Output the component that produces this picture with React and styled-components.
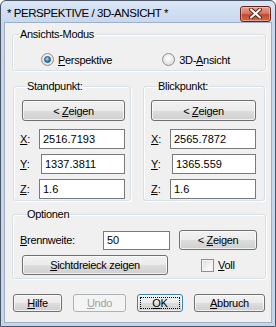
import React from 'react'
import styled, {createGlobalStyle} from 'styled-components'

const GlobalStyle = createGlobalStyle`
  html, body {
    margin: 0;
    padding: 0;
    background: #ffffff;
  }
  body {
    font-family: 'Liberation Sans', Arial, sans-serif;
    font-size: 11px;
    color: #000;
  }
`

const Window = styled.div`
  width: 276px;
  height: 327px;
  box-sizing: border-box;
  border: 1px solid #4a5566;
  border-radius: 6px 6px 0 0;
  background: linear-gradient(to bottom, #dbe6f5 0px, #c6d7ee 22px, #c4d5ec 100%);
  display: flex;
  flex-direction: column;
  padding: 0 3px 3px 3px;
  overflow: hidden;
`

const TitleBar = styled.div`
  height: 21px;
  display: flex;
  align-items: center;
  justify-content: space-between;
  padding: 0 1px 0 3px;
`

const Title = styled.span`
  font-size: 11.5px;
  letter-spacing: -0.45px;
  color: #000;
  padding-top: 2px;
`

const CloseButton = styled.div`
  width: 29px;
  height: 14px;
  margin-top: 4px;
  border: 1px solid #6d2418;
  border-radius: 3px;
  background: linear-gradient(to bottom, #e7a090 0%, #d67763 45%, #c14a30 55%, #cf6a4f 100%);
  display: flex;
  align-items: center;
  justify-content: center;
  box-shadow: inset 0 0 0 1px rgba(255, 220, 210, 0.45);
`

const Client = styled.div`
  flex: 1;
  background: #f0f0f0;
  border: 1px solid #9fb0c6;
  display: flex;
  flex-direction: column;
  padding: 5px 5px 0 7px;
`

const Group = styled.fieldset`
  margin: ${p => p.$mt || 0}px 0 0 ${p => p.$ml || 0}px;
  padding: ${p => p.$pad};
  min-width: 0;
  border: 1px solid #d5dfe5;
  border-radius: 3px;
  box-shadow: inset 1px 1px 0 #fff, 1px 1px 0 #fff;
  box-sizing: border-box;
  width: ${p => p.$w ? p.$w + 'px' : 'auto'};
`

const Legend = styled.legend`
  padding: 0 1px;
  margin-left: 6px;
  line-height: 13px;
  letter-spacing: -0.3px;
`

const Row = styled.div`
  display: flex;
  align-items: center;
  margin-top: ${p => p.$mt || 0}px;
`

const Columns = styled.div`
  display: flex;
  gap: 12px;
  margin-top: 9px;
  margin-left: 1px;
`

const Radio = styled.label`
  display: flex;
  align-items: center;
  gap: 4px;
  letter-spacing: -0.3px;
  margin-left: ${p => p.$ml}px;
`

const RadioDot = styled.span`
  width: 11px;
  height: 11px;
  border-radius: 50%;
  border: 1px solid #8e8f8f;
  background: radial-gradient(circle at 50% 40%, #ffffff 0%, #e6e6e6 60%, #d0d0d0 100%);
  display: flex;
  align-items: center;
  justify-content: center;
  &::after {
    content: '';
    display: ${p => p.$on ? 'block' : 'none'};
    width: 5px;
    height: 5px;
    border-radius: 50%;
    border: 1px solid #1e4f7a;
    background: radial-gradient(circle at 40% 35%, #a8e0ff 0%, #3d8fcf 50%, #17558e 100%);
  }
`

const Button = styled.button`
  box-sizing: border-box;
  width: ${p => p.$w}px;
  height: ${p => p.$h || 21}px;
  margin-left: ${p => p.$ml || 0}px;
  padding: 0;
  font-family: 'Liberation Sans', Arial, sans-serif;
  font-size: 11px;
  letter-spacing: -0.3px;
  color: ${p => p.$disabled ? '#a0a0a0' : '#000'};
  border: 1px solid ${p => p.$focus ? '#3c7fb1' : p.$disabled ? '#adb2b5' : '#707070'};
  border-radius: 3px;
  background: ${p => p.$disabled
    ? '#f4f4f4'
    : 'linear-gradient(to bottom, #f2f2f2 0%, #ebebeb 50%, #dddddd 51%, #cfcfcf 100%)'};
  box-shadow: inset 0 0 0 1px ${p => p.$disabled ? '#f4f4f4' : 'rgba(255,255,255,0.7)'};
  display: flex;
  align-items: center;
  justify-content: center;
  position: relative;
  flex-shrink: 0;
  white-space: pre;
  ${p => p.$focus && `
    &::after {
      content: '';
      position: absolute;
      inset: 2px;
      border: 1px dotted #000;
    }
  `}
`

const Field = styled.div`
  box-sizing: border-box;
  width: ${p => p.$w}px;
  height: ${p => p.$h || 20}px;
  border: 1px solid #7a7a7a;
  background: #fff;
  padding: 0 0 0 3px;
  display: flex;
  align-items: center;
  flex-shrink: 0;
`

const CoordRows = styled.div`
  display: flex;
  flex-direction: column;
  gap: 5px;
  margin-top: 8px;
`

const CoordLabel = styled.span`
  width: ${p => p.$w}px;
  flex-shrink: 0;
`

const Text = styled.span`
  letter-spacing: -0.3px;
  width: ${p => p.$w ? p.$w + 'px' : 'auto'};
  flex-shrink: 0;
`

const Check = styled.span`
  width: 11px;
  height: 11px;
  border: 1px solid #8e8f8f;
  background: linear-gradient(135deg, #dcdcdc 0%, #f4f4f4 60%, #ffffff 100%);
  box-shadow: inset 0 0 0 1px #f4f4f4;
  margin-left: 33px;
  margin-right: 4px;
  flex-shrink: 0;
`

const Footer = styled.div`
  display: flex;
  gap: 11px;
  margin-top: 15px;
  margin-left: 1px;
`

const U = styled.span`
  text-decoration: underline;
`

const Zeigen = () => <span>&lt; <U>Z</U>eigen</span>

export default function App() {
  return (
    <>
      <GlobalStyle />
      <Window>
        <TitleBar>
          <Title>* PERSPEKTIVE / 3D-ANSICHT *</Title>
          <CloseButton>
            <svg width="13" height="11" viewBox="0 0 13 11">
              <path d="M2 1.5 L11 9.5 M11 1.5 L2 9.5" stroke="#5a1d12" strokeWidth="4" strokeLinecap="round" />
              <path d="M2 1.5 L11 9.5 M11 1.5 L2 9.5" stroke="#ffffff" strokeWidth="2.2" strokeLinecap="round" />
            </svg>
          </CloseButton>
        </TitleBar>
        <Client>
          <Group $pad="12px 0 4px 0">
            <Legend>Ansichts-Modus</Legend>
            <Row>
              <Radio $ml={28}><RadioDot $on /><span><U>P</U>erspektive</span></Radio>
              <Radio $ml={50}><RadioDot /><span>3D-<U>A</U>nsicht</span></Radio>
            </Row>
          </Group>

          <Columns>
            <Group $w={118} $pad="7px 0 1px 6px">
              <Legend>Standpunkt:</Legend>
              <Button $w={103} $ml={2}><Zeigen /></Button>
              <CoordRows>
                <Row><CoordLabel $w={19}><U>X</U>:</CoordLabel><Field $w={86}>2516.7193</Field></Row>
                <Row><CoordLabel $w={21}><U>Y</U>:</CoordLabel><Field $w={84}>1337.3811</Field></Row>
                <Row><CoordLabel $w={19}><U>Z</U>:</CoordLabel><Field $w={86}>1.6</Field></Row>
              </CoordRows>
            </Group>
            <Group $w={122} $pad="7px 0 1px 7px">
              <Legend>Blickpunkt:</Legend>
              <Button $w={105}><Zeigen /></Button>
              <CoordRows>
                <Row><CoordLabel $w={19}><U>X</U>:</CoordLabel><Field $w={86}>2565.7872</Field></Row>
                <Row><CoordLabel $w={21}><U>Y</U>:</CoordLabel><Field $w={84}>1365.559</Field></Row>
                <Row><CoordLabel $w={19}><U>Z</U>:</CoordLabel><Field $w={86}>1.6</Field></Row>
              </CoordRows>
            </Group>
          </Columns>

          <Group $mt={7} $pad="9px 0 3px 7px">
            <Legend>Optionen</Legend>
            <Row>
              <Text $w={83}><U>B</U>rennweite:</Text>
              <Field $w={67} $h={19}>50</Field>
              <Button $w={78} $h={20} $ml={9}><Zeigen /></Button>
            </Row>
            <Row $mt={5}>
              <Button $w={146} $h={20} $ml={2}><span><U>S</U>ichtdreieck zeigen</span></Button>
              <Check />
              <Text><U>V</U>oll</Text>
            </Row>
          </Group>

          <Footer>
            <Button $w={49} $h={18}><span><U>H</U>ilfe</span></Button>
            <Button $w={53} $h={18} $disabled><span><U>U</U>ndo</span></Button>
            <Button $w={46} $h={18} $focus><span><U>O</U>K</span></Button>
            <Button $w={71} $h={18}><span><U>A</U>bbruch</span></Button>
          </Footer>
        </Client>
      </Window>
    </>
  )
}
